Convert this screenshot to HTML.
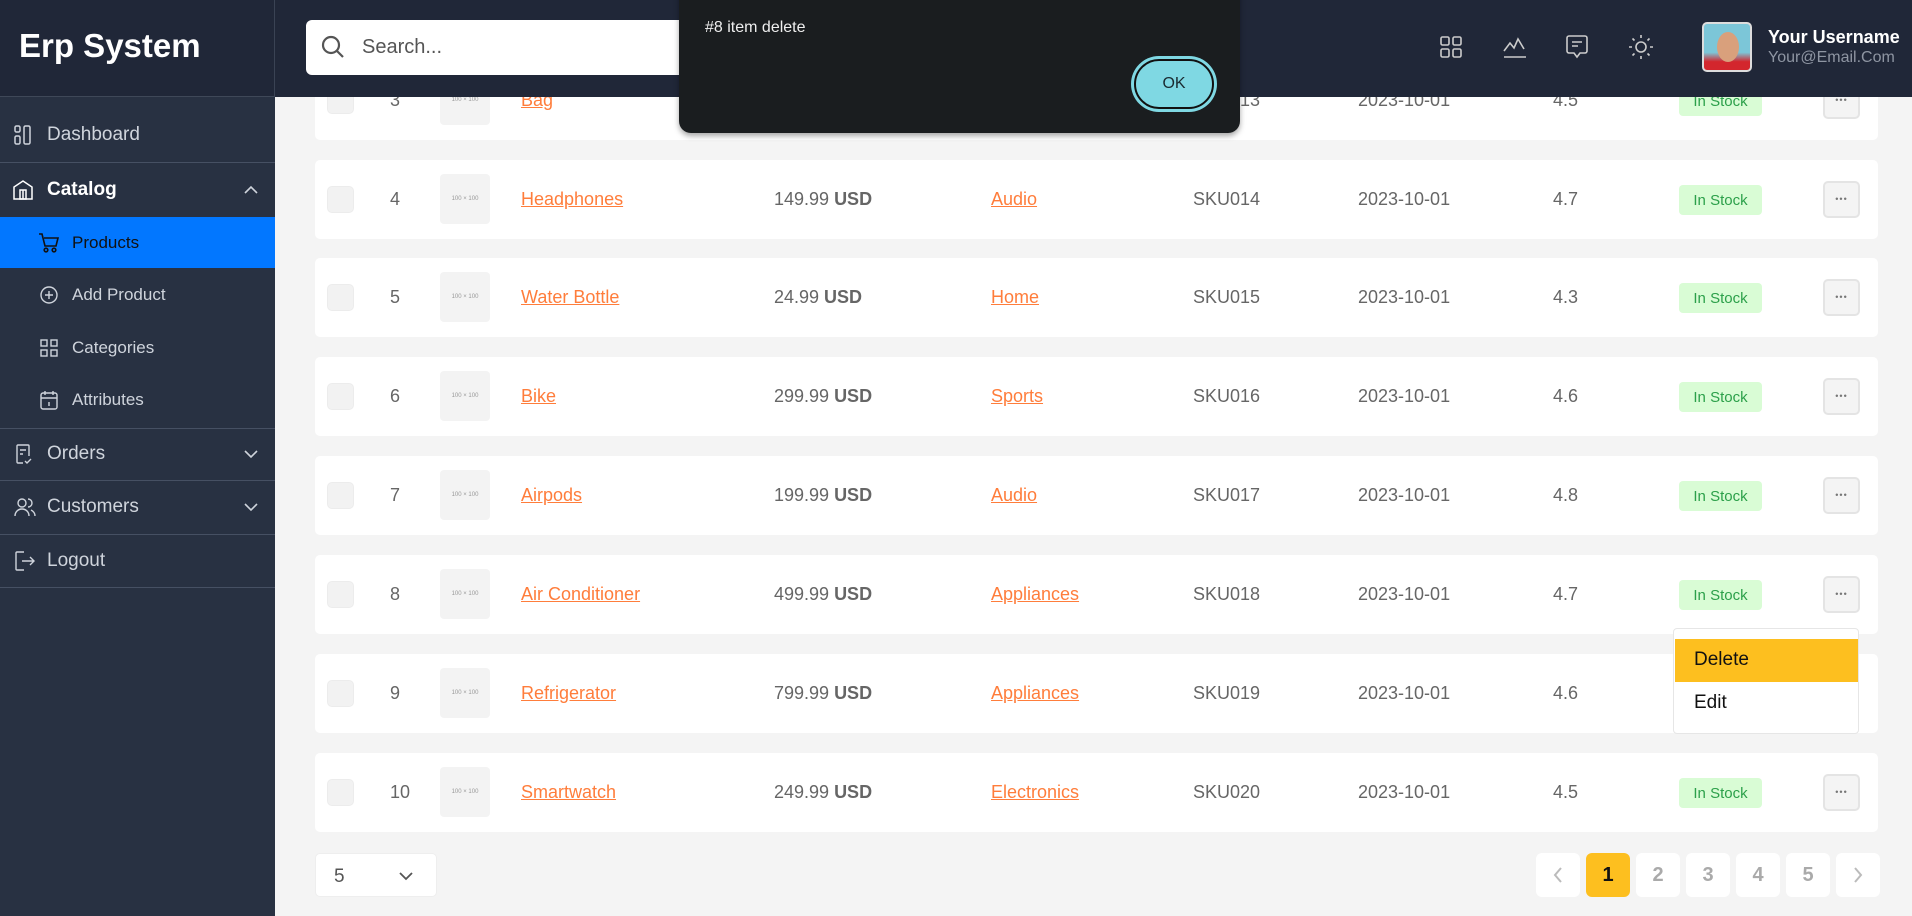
<!DOCTYPE html>
<html><head><meta charset="utf-8"><style>
*{box-sizing:border-box;margin:0;padding:0}
body{width:1912px;height:916px;overflow:hidden;background:#f4f4f4;font-family:"Liberation Sans",sans-serif;position:relative}
.abs{position:absolute}
#side{left:0;top:0;width:275px;height:916px;background:#283142}
#logo{left:0;top:0;width:275px;height:97px;background:#202738;border-right:1px solid #3a4354;border-bottom:1px solid #3f4858}
#logo span{position:absolute;left:19px;top:27px;color:#fff;font-size:33px;font-weight:bold}
.hr{left:0;width:275px;height:1px;background:#465063}
.nav{left:0;width:275px;color:#cfd4dc;font-size:19px;display:flex;align-items:center}
.nav svg{position:absolute}
.nav .t{position:absolute;left:47px}
.sub .t{left:72px;font-size:17px}
.card{left:315px;width:1563px;height:79px;background:#fff;border-radius:5px}
.cell{position:absolute;top:0;height:79px;display:flex;align-items:center;font-size:18px;color:#666}
.cb{position:absolute;left:12px;top:26px;width:27px;height:27px;background:#f2f2f2;border-radius:5px;border:1px solid #ececec}
.img{position:absolute;left:125px;top:14px;width:50px;height:50px;background:#f3f3f3;border-radius:4px;font-size:6px;color:#999;display:flex;align-items:center;justify-content:center}
.lnk{color:#ff7d3b;text-decoration:underline}
.badge{position:absolute;left:1364px;top:25px;width:83px;height:30px;background:#d9fcd5;color:#2ca04a;border-radius:4px;font-size:15px;display:flex;align-items:center;justify-content:center}
.dots{position:absolute;left:1508px;top:21px;width:37px;height:37px;border:2px solid #e4e4e4;background:#f4f4f4;border-radius:5px;display:flex;align-items:center;justify-content:center;color:#777;font-size:9px;letter-spacing:1px;line-height:1}
.pg{top:853px;width:44px;height:44px;background:#fff;border-radius:6px;display:flex;align-items:center;justify-content:center;font-size:20px;color:#aaa;font-weight:bold}
</style></head><body>
<div id="side" class="abs"></div>
<div id="logo" class="abs"><span>Erp System</span></div>

<div class="abs nav" style="top:115px;height:40px">
<svg style="left:13px" width="20" height="22" viewBox="0 0 20 22" fill="none" stroke="#cfd4dc" stroke-width="1.5"><rect x="2" y="2" width="5" height="6" rx="1.5"/><rect x="2" y="12" width="5" height="8" rx="1.5"/><rect x="11" y="2" width="6" height="18" rx="1.5"/></svg>
<span class="t">Dashboard</span></div>
<div class="abs hr" style="top:162px"></div>
<div class="abs nav" style="top:170px;height:40px;color:#fff;font-weight:bold">
<svg style="left:12px" width="22" height="22" viewBox="0 0 22 22" fill="none" stroke="#fff" stroke-width="1.5"><path d="M2 20V8L11 2l9 6v12z"/><rect x="8" y="11" width="6" height="9"/><path d="M11 11v9"/></svg>
<span class="t">Catalog</span>
<svg style="left:244px" width="14" height="10" viewBox="0 0 14 10" fill="none" stroke="#cfd4dc" stroke-width="1.6"><path d="M1 8l6-6 6 6"/></svg></div>
<div class="abs" style="left:0;top:217px;width:275px;height:51px;background:#0277ff"></div>
<div class="abs nav sub" style="top:217px;height:51px;color:#111">
<svg style="left:38px" width="22" height="20" viewBox="0 0 22 20" fill="none" stroke="#111" stroke-width="1.6"><path d="M1 1h3l3 12h11l2-8H6"/><circle cx="8" cy="17" r="1.8"/><circle cx="16" cy="17" r="1.8"/></svg>
<span class="t">Products</span></div>
<div class="abs nav sub" style="top:275px;height:40px">
<svg style="left:39px" width="20" height="20" viewBox="0 0 20 20" fill="none" stroke="#cfd4dc" stroke-width="1.4"><circle cx="10" cy="10" r="8"/><path d="M10 6v8M6 10h8"/></svg>
<span class="t">Add Product</span></div>
<div class="abs nav sub" style="top:328px;height:40px">
<svg style="left:40px" width="18" height="18" viewBox="0 0 18 18" fill="none" stroke="#cfd4dc" stroke-width="1.4"><rect x="1" y="1" width="6" height="6"/><rect x="11" y="1" width="6" height="6"/><rect x="1" y="11" width="6" height="6"/><rect x="11" y="11" width="6" height="6"/></svg>
<span class="t">Categories</span></div>
<div class="abs nav sub" style="top:380px;height:40px">
<svg style="left:40px" width="18" height="20" viewBox="0 0 18 20" fill="none" stroke="#cfd4dc" stroke-width="1.4"><rect x="1" y="3" width="16" height="16" rx="2"/><path d="M1 8h16M5 1v4M13 1v4M9 12v4"/></svg>
<span class="t">Attributes</span></div>
<div class="abs hr" style="top:428px"></div>
<div class="abs nav" style="top:434px;height:40px">
<svg style="left:15px" width="18" height="22" viewBox="0 0 18 22" fill="none" stroke="#cfd4dc" stroke-width="1.4"><path d="M8 20H3a1 1 0 01-1-1V3a1 1 0 011-1h10a1 1 0 011 1v10"/><path d="M5 7h6M5 11h3M10 18l2 2 4-4"/></svg>
<span class="t">Orders</span>
<svg style="left:244px" width="14" height="10" viewBox="0 0 14 10" fill="none" stroke="#cfd4dc" stroke-width="1.6"><path d="M1 2l6 6 6-6"/></svg></div>
<div class="abs hr" style="top:480px"></div>
<div class="abs nav" style="top:487px;height:40px">
<svg style="left:14px" width="22" height="20" viewBox="0 0 22 20" fill="none" stroke="#cfd4dc" stroke-width="1.4"><circle cx="8" cy="6" r="4"/><path d="M1 19c0-4 3-7 7-7s7 3 7 7M14 2a4 4 0 010 8M17 13c2 1 4 3 4 6"/></svg>
<span class="t">Customers</span>
<svg style="left:244px" width="14" height="10" viewBox="0 0 14 10" fill="none" stroke="#cfd4dc" stroke-width="1.6"><path d="M1 2l6 6 6-6"/></svg></div>
<div class="abs hr" style="top:534px"></div>
<div class="abs nav" style="top:541px;height:40px">
<svg style="left:14px" width="22" height="20" viewBox="0 0 22 20" fill="none" stroke="#cfd4dc" stroke-width="1.4"><path d="M10 1H3a1 1 0 00-1 1v16a1 1 0 001 1h7M8 10h12M16 6l4 4-4 4"/></svg>
<span class="t">Logout</span></div>
<div class="abs hr" style="top:587px"></div>

<div class="abs card" style="top:61px"><div class="cb"></div><div class="cell" style="left:75px">3</div><div class="img">100 × 100</div><div class="cell lnk" style="left:206px">Bag</div><div class="cell" style="left:878px">SKU013</div><div class="cell" style="left:1043px">2023-10-01</div><div class="cell" style="left:1238px">4.5</div><div class="badge">In Stock</div><div class="dots">•••</div></div>
<div class="abs card" style="top:160px"><div class="cb"></div><div class="cell" style="left:75px">4</div><div class="img">100 × 100</div><div class="cell lnk" style="left:206px">Headphones</div><div class="cell" style="left:459px">149.99&nbsp;<b>USD</b></div><div class="cell lnk" style="left:676px">Audio</div><div class="cell" style="left:878px">SKU014</div><div class="cell" style="left:1043px">2023-10-01</div><div class="cell" style="left:1238px">4.7</div><div class="badge">In Stock</div><div class="dots">•••</div></div>
<div class="abs card" style="top:258px"><div class="cb"></div><div class="cell" style="left:75px">5</div><div class="img">100 × 100</div><div class="cell lnk" style="left:206px">Water Bottle</div><div class="cell" style="left:459px">24.99&nbsp;<b>USD</b></div><div class="cell lnk" style="left:676px">Home</div><div class="cell" style="left:878px">SKU015</div><div class="cell" style="left:1043px">2023-10-01</div><div class="cell" style="left:1238px">4.3</div><div class="badge">In Stock</div><div class="dots">•••</div></div>
<div class="abs card" style="top:357px"><div class="cb"></div><div class="cell" style="left:75px">6</div><div class="img">100 × 100</div><div class="cell lnk" style="left:206px">Bike</div><div class="cell" style="left:459px">299.99&nbsp;<b>USD</b></div><div class="cell lnk" style="left:676px">Sports</div><div class="cell" style="left:878px">SKU016</div><div class="cell" style="left:1043px">2023-10-01</div><div class="cell" style="left:1238px">4.6</div><div class="badge">In Stock</div><div class="dots">•••</div></div>
<div class="abs card" style="top:456px"><div class="cb"></div><div class="cell" style="left:75px">7</div><div class="img">100 × 100</div><div class="cell lnk" style="left:206px">Airpods</div><div class="cell" style="left:459px">199.99&nbsp;<b>USD</b></div><div class="cell lnk" style="left:676px">Audio</div><div class="cell" style="left:878px">SKU017</div><div class="cell" style="left:1043px">2023-10-01</div><div class="cell" style="left:1238px">4.8</div><div class="badge">In Stock</div><div class="dots">•••</div></div>
<div class="abs card" style="top:555px"><div class="cb"></div><div class="cell" style="left:75px">8</div><div class="img">100 × 100</div><div class="cell lnk" style="left:206px">Air Conditioner</div><div class="cell" style="left:459px">499.99&nbsp;<b>USD</b></div><div class="cell lnk" style="left:676px">Appliances</div><div class="cell" style="left:878px">SKU018</div><div class="cell" style="left:1043px">2023-10-01</div><div class="cell" style="left:1238px">4.7</div><div class="badge">In Stock</div><div class="dots">•••</div></div>
<div class="abs card" style="top:654px"><div class="cb"></div><div class="cell" style="left:75px">9</div><div class="img">100 × 100</div><div class="cell lnk" style="left:206px">Refrigerator</div><div class="cell" style="left:459px">799.99&nbsp;<b>USD</b></div><div class="cell lnk" style="left:676px">Appliances</div><div class="cell" style="left:878px">SKU019</div><div class="cell" style="left:1043px">2023-10-01</div><div class="cell" style="left:1238px">4.6</div></div>
<div class="abs card" style="top:753px"><div class="cb"></div><div class="cell" style="left:75px">10</div><div class="img">100 × 100</div><div class="cell lnk" style="left:206px">Smartwatch</div><div class="cell" style="left:459px">249.99&nbsp;<b>USD</b></div><div class="cell lnk" style="left:676px">Electronics</div><div class="cell" style="left:878px">SKU020</div><div class="cell" style="left:1043px">2023-10-01</div><div class="cell" style="left:1238px">4.5</div><div class="badge">In Stock</div><div class="dots">•••</div></div>

<div class="abs" style="left:275px;top:0;width:1637px;height:97px;background:#202738"></div>
<div class="abs" style="left:306px;top:20px;width:400px;height:55px;background:#fff;border-radius:6px">
<svg style="position:absolute;left:14px;top:14px" width="26" height="26" viewBox="0 0 26 26" fill="none" stroke="#555" stroke-width="2.2"><circle cx="11" cy="11" r="8"/><path d="M17 17l6 6"/></svg>
<span style="position:absolute;left:56px;top:16px;font-size:20px;color:#555">Search...</span></div>
<svg class="abs" style="left:1439px;top:35px" width="24" height="24" viewBox="0 0 24 24" fill="none" stroke="#ccc" stroke-width="1.6"><rect x="2" y="2" width="8" height="8" rx="1.5"/><rect x="14" y="2" width="8" height="8" rx="1.5"/><rect x="2" y="14" width="8" height="8" rx="1.5"/><rect x="14" y="14" width="8" height="8" rx="1.5"/></svg>
<svg class="abs" style="left:1502px;top:35px" width="26" height="24" viewBox="0 0 26 24" fill="none" stroke="#ccc" stroke-width="1.6"><path d="M2 16l6-8 4 5 4-9 6 10M2 22h22"/></svg>
<svg class="abs" style="left:1565px;top:34px" width="24" height="26" viewBox="0 0 24 26" fill="none" stroke="#ccc" stroke-width="1.6"><path d="M4 2h16a2 2 0 012 2v13a2 2 0 01-2 2h-5l-3 4-3-4H4a2 2 0 01-2-2V4a2 2 0 012-2z"/><path d="M7 8h10M7 12h6"/></svg>
<svg class="abs" style="left:1627px;top:33px" width="28" height="28" viewBox="0 0 28 28" fill="none" stroke="#ccc" stroke-width="1.6"><circle cx="14" cy="14" r="5"/><path d="M14 2v3M14 23v3M2 14h3M23 14h3M5.5 5.5l2 2M20.5 20.5l2 2M5.5 22.5l2-2M20.5 7.5l2-2"/></svg>
<div class="abs" style="left:1702px;top:22px;width:50px;height:50px;border-radius:5px;background:linear-gradient(#7cc6d8 0,#7cc6d8 62%,#d3262d 82%);border:2px solid #ddd;overflow:hidden">
<div style="position:absolute;left:13px;top:8px;width:22px;height:30px;border-radius:50%;background:#d9a07c"></div></div>
<div class="abs" style="left:1768px;top:27px;color:#fff;font-weight:bold;font-size:18px">Your Username</div>
<div class="abs" style="left:1768px;top:49px;color:#8e95a2;font-size:16px">Your@Email.Com</div>

<div class="abs" style="left:679px;top:-20px;width:561px;height:153px;background:#1a1d1f;border-radius:0 0 12px 12px;box-shadow:0 3px 6px rgba(0,0,0,.35)">
<div style="position:absolute;left:26px;top:39px;color:#eee;font-size:16px">#8 item delete</div>
<div style="position:absolute;left:452px;top:76px;width:86px;height:56px;border-radius:28px;background:#7fd8e3;padding:3px"><div style="width:100%;height:100%;border-radius:25px;border:2px solid #111;background:#7fd8e3;display:flex;align-items:center;justify-content:center;font-size:16px;color:#1a2a30">OK</div></div>
</div>

<div class="abs" style="left:1673px;top:628px;width:186px;height:106px;background:#fff;border:1px solid #e6e6e6;border-radius:4px">
<div style="position:absolute;left:1px;top:10px;width:183px;height:43px;background:#fdbf1f"></div>
<div style="position:absolute;left:20px;top:20px;font-size:19px;color:#111">Delete</div>
<div style="position:absolute;left:20px;top:63px;font-size:19px;color:#111">Edit</div>
</div>

<div class="abs" style="left:315px;top:853px;width:122px;height:44px;background:#fff;border-radius:5px;border:1px solid #eee">
<span style="position:absolute;left:18px;top:12px;font-size:19px;color:#555">5</span>
<svg style="position:absolute;left:82px;top:17px" width="16" height="10" viewBox="0 0 16 10" fill="none" stroke="#555" stroke-width="1.8"><path d="M2 2l6 6 6-6"/></svg></div>
<div class="abs pg" style="left:1536px"><svg width="12" height="18" viewBox="0 0 12 18" fill="none" stroke="#bbb" stroke-width="2"><path d="M9 2L3 9l6 7"/></svg></div>
<div class="abs pg" style="left:1586px;background:#fdbf1f;color:#111">1</div>
<div class="abs pg" style="left:1636px">2</div>
<div class="abs pg" style="left:1686px">3</div>
<div class="abs pg" style="left:1736px">4</div>
<div class="abs pg" style="left:1786px">5</div>
<div class="abs pg" style="left:1836px"><svg width="12" height="18" viewBox="0 0 12 18" fill="none" stroke="#bbb" stroke-width="2"><path d="M3 2l6 7-6 7"/></svg></div>
</body></html>
